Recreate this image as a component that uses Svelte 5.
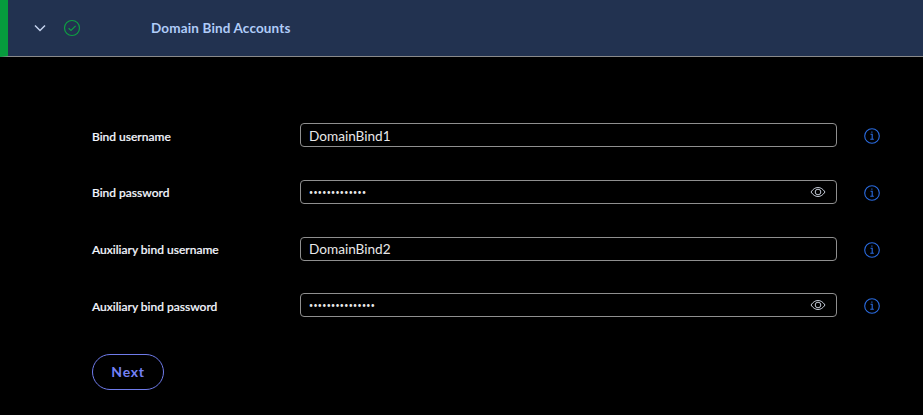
<script>
  const rows = [
    { label: 'Bind username', type: 'text', value: 'DomainBind1' },
    { label: 'Bind password', type: 'password', value: 'aaaaaaaaaaaaa' },
    { label: 'Auxiliary bind username', type: 'text', value: 'DomainBind2' },
    { label: 'Auxiliary bind password', type: 'password', value: 'aaaaaaaaaaaaaaa' }
  ];
</script>

<div class="page">
  <header class="header">
    <svg class="chevron" width="14" height="14" viewBox="0 0 14 14" fill="none"><path d="M2 4.5 7 9.5 12 4.5" stroke="#c5d3ee" stroke-width="1.5"/></svg>
    <svg class="check" width="18" height="18" viewBox="0 0 18 18" fill="none">
      <circle cx="9" cy="9" r="7.5" stroke="#0e9f43" stroke-width="1.2"/>
      <path d="M5.6 9.2 8 11.4 12.6 6.8" stroke="#0e9f43" stroke-width="1.2"/>
    </svg>
    <h1>Domain Bind Accounts</h1>
  </header>

  <form class="form">
    {#each rows as row}
      <div class="row">
        <label for={row.label}>{row.label}</label>
        <div class="field">
          <input id={row.label} type={row.type} value={row.value} />
          {#if row.type === 'password'}
            <svg class="eye" width="16" height="12" viewBox="0 0 16 12" fill="none" stroke="#c3cad6" stroke-width="1">
              <path d="M1 6C3 3 5.3 1.5 8 1.5S13 3 15 6C13 9 10.700 10.500 8 10.500S3 9 1 6Z"/>
              <circle cx="8" cy="6" r="2.800"/>
            </svg>
          {/if}
        </div>
        <svg class="info" width="16" height="16" viewBox="0 0 16 16" fill="none" stroke="#2a6be0">
          <circle cx="8" cy="8" r="7.300" stroke-width="1.100"/>
          <path d="M6.500 6.300H8.200V11.300M6.300 11.300H9.800" stroke-width="1.100"/>
          <path d="M7.400 4.200H8.400" stroke-width="1.200"/>
        </svg>
      </div>
    {/each}
    <button type="button" class="next">Next</button>
  </form>
</div>

<style>
  :global(body) {
    margin: 0;
    background: #000;
  }
  .page {
    width: 923px;
    height: 415px;
    overflow: hidden;
    background: #000;
    font-family: Lato, "Noto Sans", sans-serif;
  }
  .header {
    box-sizing: border-box;
    height: 57px;
    display: flex;
    align-items: center;
    background: #223250;
    border-left: 8px solid #069c3d;
    border-bottom: 1px solid #8a8a8a;
    padding-left: 25px;
  }
  .chevron { margin-right: 16px; }
  .check { margin-right: 70px; }
  h1 {
    margin: 0;
    font-size: 13.500px;
    font-weight: 700;
    color: #b0ccf8;
    letter-spacing: 0.15px;
  }
  .form {
    padding: 66.300px 0 0 92px;
    display: flex;
    flex-direction: column;
  }
  .row {
    display: flex;
    align-items: center;
    height: 24px;
    margin-bottom: 32.670px;
  }
  label {
    width: 208px;
    padding-top: 2px;
    font-size: 12px;
    font-weight: 500;
    color: #f4f7ff;
    -webkit-text-stroke: 0.2px #f4f7ff;
  }
  .field {
    position: relative;
    width: 537px;
    height: 24px;
    margin-right: 27px;
  }
  input {
    display: block;
    box-sizing: border-box;
    width: 100%;
    height: 100%;
    background: #000;
    border: 1px solid #8f8f8f;
    border-radius: 4px;
    padding: 1px 8px 0;
    color: #e8e8e8;
    font-family: inherit;
    font-size: 13.600px;
    outline: none;
  }
  input[type='password'] {
    font-size: 7px;
    letter-spacing: 0.35px;
    padding-top: 0;
  }
  .eye {
    position: absolute;
    right: 11px;
    top: 6px;
  }
  .info {
    margin-top: 2px;
  }
  .next {
    box-sizing: border-box;
    width: 72px;
    height: 36px;
    margin-top: 3.700px;
    background: transparent;
    border: 1px solid #6f7bea;
    border-radius: 18px;
    color: #7480f5;
    font-family: inherit;
    font-size: 14px;
    font-weight: 700;
    letter-spacing: 0.7px;
    padding: 0;
  }
</style>
